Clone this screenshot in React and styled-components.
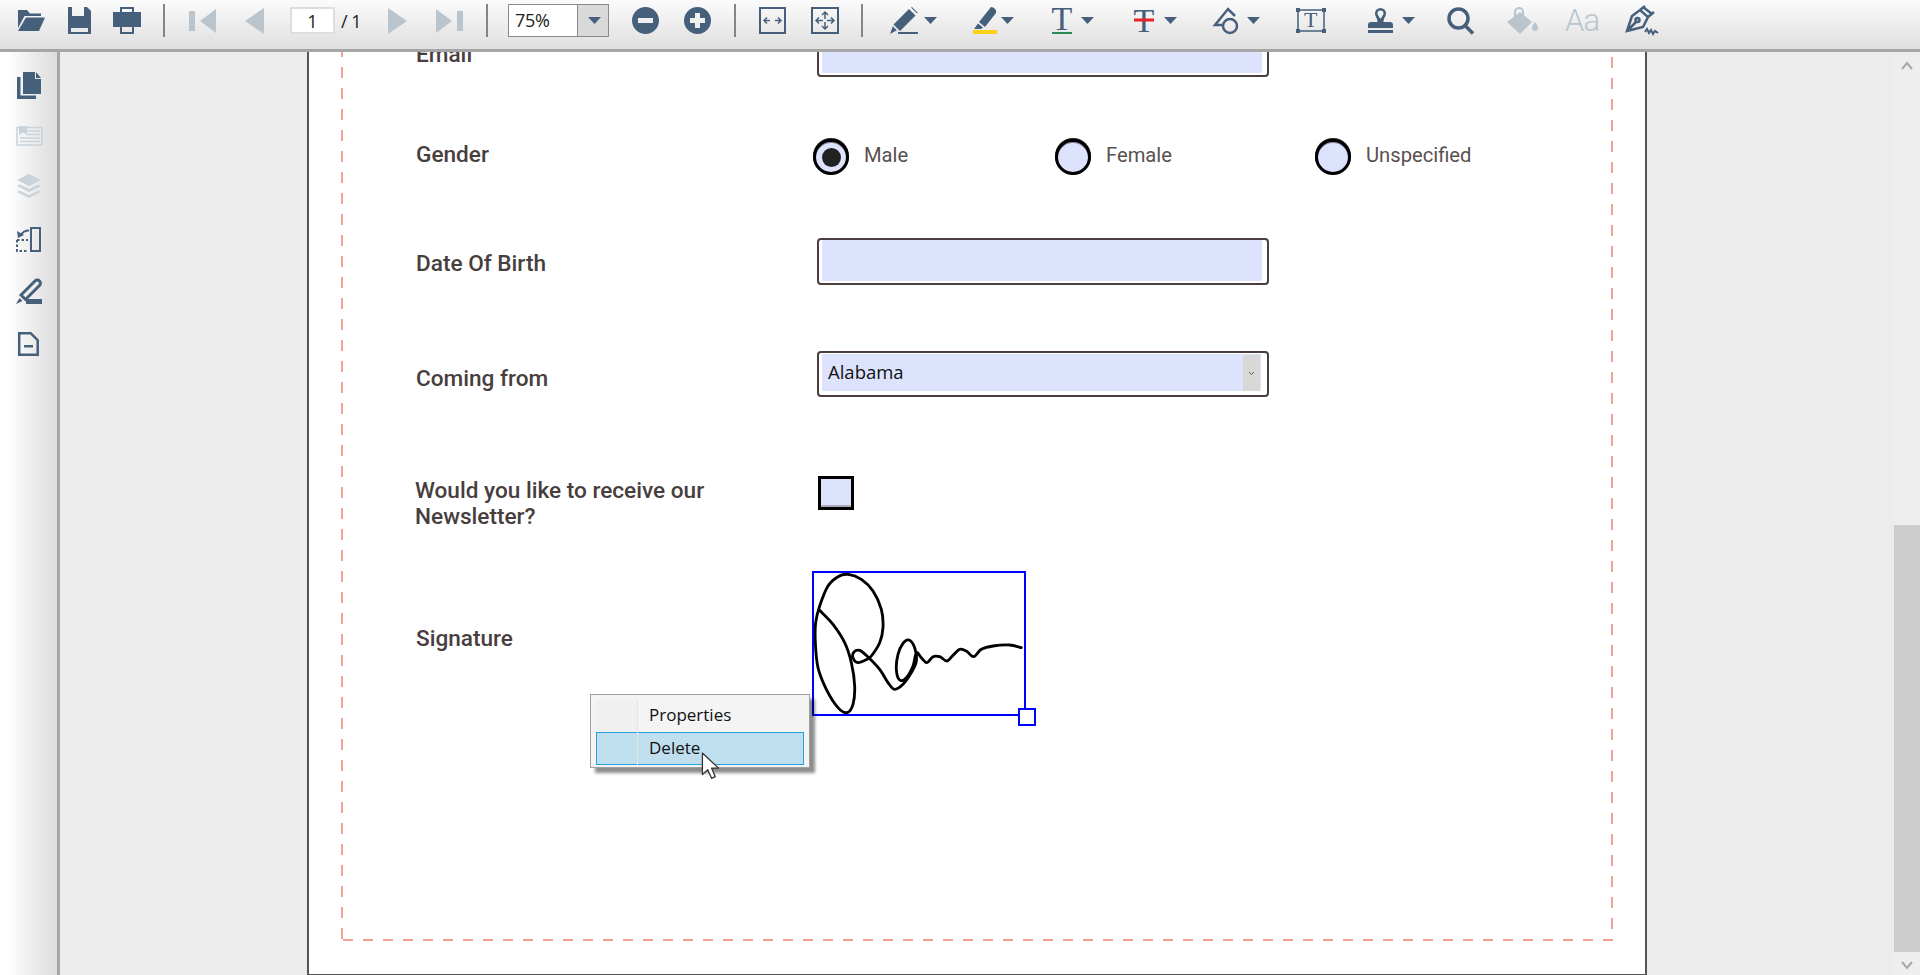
import React from 'react';
import styled, { createGlobalStyle } from 'styled-components';

const INK = '#46607c';
const OFF = '#b9c4cd';
const FAINT = '#c9d3db';
const FIELD = '#dde3fd';

const Global = createGlobalStyle`
  html, body { margin: 0; padding: 0; height: 975px; overflow: hidden; background: #ececec; }
  * { box-sizing: border-box; }
`;

const Shell = styled.div`
  width: 1920px; height: 975px; display: flex; flex-direction: column; overflow: hidden;
  font-family: Roboto, sans-serif;
`;
const Toolbar = styled.header`
  flex: none; height: 52px; display: flex; align-items: center; padding: 0 0 8px 18px;
  background: linear-gradient(#fbfbfb, #dfdfdf); border-bottom: 3px solid #a6a6a6;
`;
const Glyph = styled.svg`
  flex: none; display: block; overflow: visible; margin-left: ${p => p.$ml || 0}px; margin-top: ${p => p.$mt || 0}px;
  fill: ${p => p.$tone || INK};
`;
const Sep = styled.span`
  flex: none; width: 2px; height: 33px; background: #858585; margin-left: ${p => p.$ml}px;
`;
const PageBox = styled.span`
  flex: none; width: 45px; height: 27px; margin-left: 26px; background: #fff; border: 2px solid #dedede;
  font: 18px "Open Sans", sans-serif; color: #222; display: flex; align-items: center; justify-content: center;
`;
const PageTotal = styled.span`
  flex: none; width: 18px; margin-left: 6px; font: 18px "Open Sans", sans-serif; color: #222; white-space: nowrap; letter-spacing: -0.5px;
`;
const Zoom = styled.div`
  flex: none; width: 101px; height: 33px; margin-left: 20px; display: flex; border: 1px solid #8a8a8a; background: #fff;
`;
const ZoomValue = styled.span`
  flex: 1; padding-left: 6px; font: 18px/31px "Open Sans", sans-serif; color: #222; letter-spacing: -0.3px;
`;
const ZoomButton = styled.span`
  flex: none; width: 31px; padding-left: 2px; background: #d9d9d9; border-left: 1px solid #8a8a8a; display: flex; align-items: center; justify-content: center;
`;
const AaMark = styled.span`
  flex: none; margin-left: 27px; width: 34px; font: 300 31px/27px Roboto, sans-serif; color: ${OFF}; white-space: nowrap; letter-spacing: -1px;
`;

const Body = styled.div`flex: 1; min-height: 0; display: flex;`;
const Sidebar = styled.aside`
  flex: none; width: 60px; display: flex; flex-direction: column; align-items: flex-start; padding: 20px 0 0 16px;
  background: linear-gradient(90deg, #fff 12%, #dcdcdc 100%); border-right: 3px solid #a6a6a6;
`;
const Viewer = styled.main`flex: 1; min-width: 0; overflow: hidden; padding-left: 247px; background: #ececec;`;
const Paper = styled.section`
  width: 1340px; margin-top: -60px; padding: 32px 32px 33px; background: #fff;
  border: 2px solid #555;
`;
const Frame = styled.div`
  padding: 4px 0 225px 75px;
  background-repeat: no-repeat;
  background-image:
    repeating-linear-gradient(to top, transparent 0 2px, #f4a094 2px 13px, transparent 13px 21px),
    repeating-linear-gradient(to top, #f4a094 0 2px, transparent 2px 12px, #f4a094 12px 21px),
    repeating-linear-gradient(to left, #f4a094 0 10px, transparent 10px 20px);
  background-size: 2px 100%, 2px 100%, 100% 2px;
  background-position: left top, right top, left bottom;
`;
const Row = styled.div`
  display: grid; grid-template-columns: 401px 1fr; align-items: start; height: ${p => p.$h}px; margin-bottom: ${p => p.$after}px;
`;
const Label = styled.label`
  margin: ${p => p.$top}px 0 0 ${p => p.$left || 0}px; font: 500 22.6px/26px Roboto, sans-serif; color: #483e3e;
`;
const TextField = styled.div`
  width: 452px; height: 47px; border: 2px solid #4a3e3e; border-radius: 4px; background: ${FIELD};
  box-shadow: inset 3px 0 0 #fff, inset -5px -2px 0 #fff;
`;
const SelectField = styled.div`
  width: 452px; height: 46px; padding: 1px 6px 4px 3px; border: 2px solid #4a3e3e; border-radius: 4px; background: #fff;
`;
const SelectFill = styled.div`
  height: 100%; display: flex; align-items: stretch; justify-content: space-between; padding: 1px 1px 0 6px; background: ${FIELD};
  font: 18.5px/34px "Open Sans", sans-serif; color: #111;
`;
const SelectArrow = styled.span`
  flex: none; width: 17px; background: #d8d8d8; display: flex; align-items: center; justify-content: center;
`;
const RadioGroup = styled.div`display: flex; margin-left: -4px;`;
const RadioItem = styled.div`
  width: ${p => p.$w}px; display: flex; align-items: flex-start; gap: 15px;
  font: 20.2px/26px Roboto, sans-serif; color: #5a5050;
`;
const RadioText = styled.span`margin-top: 4px;`;
const RadioMark = styled.span`
  flex: none; width: 36px; height: 36px; margin-top: 1px; border-radius: 50%; border: 3px solid #000; background: ${FIELD};
  box-shadow: 0 -1px 0 #222, inset 0 1px 0 rgba(0,0,0,.4); display: flex; align-items: center; justify-content: center;
`;
const RadioDot = styled.span`width: 19px; height: 19px; border-radius: 50%; background: #222;`;
const CheckMark = styled.div`
  width: 36px; height: 34px; margin-left: 1px; border: 3px solid #000; background: ${FIELD}; box-shadow: inset 0 -2px 0 #aab;
`;
const SignatureBox = styled.div`
  position: relative; width: 214px; height: 145px; margin-left: -5px; border: 2px solid #00f; background: #fff;
`;
const Handle = styled.span`
  position: absolute; left: 204px; top: 135px; width: 18px; height: 18px; border: 2px solid #00f; background: #fff;
`;
const Menu = styled.div`
  position: absolute; left: -224px; top: 121px; width: 220px; height: 74px; padding: 4px 5px 0;
  background: #f4f4f4; border: 1px solid #a0a0a0; box-shadow: 5px 5px 3px rgba(0,0,0,.45);
`;
const MenuRow = styled.div`
  display: flex; height: 33px; align-items: stretch;
  font: 17px/31px "Open Sans", sans-serif; color: #111;
  background: ${p => (p.$active ? '#c0dfee' : 'transparent')};
  box-shadow: ${p => (p.$active ? 'inset 0 0 0 1px #26a0da' : 'none')};
`;
const MenuGutter = styled.span`
  flex: none; width: 42px; border-right: 1px solid #e4e4e4;
  background: ${p => (p.$active ? 'transparent' : '#f0f0f0')};
`;
const MenuText = styled.span`padding-left: 11px;`;
const Pointer = styled.svg`position: absolute; left: 110px; top: 57px; display: block;`;

const Scrollbar = styled.div`
  flex: none; width: 26px; display: flex; flex-direction: column; align-items: stretch; background: #eeeeee;
`;
const ScrollEnd = styled.span`
  flex: none; height: ${p => p.$h}px; padding-top: ${p => p.$pt || 0}px; display: flex; align-items: center; justify-content: center;
`;
const ScrollThumb = styled.span`flex: none; height: 427px; background: #cdcdcd;`;
const ScrollTrack = styled.span`flex: 1;`;

const Caret = ({ ml }) => (
  <Glyph $ml={ml} width="13" height="7" viewBox="0 0 13 7"><path d="M0 0h13L6.500 7z" /></Glyph>
);
const Chevron = ({ up }) => (
  <svg width="12" height="9" viewBox="0 0 12 9" fill="none" stroke="#a6a6a6" strokeWidth="2">
    <path d={up ? 'M1 8l5-6 5 6' : 'M1 1l5 6 5-6'} />
  </svg>
);
const Stroke = styled.g`fill: none; stroke: ${p => p.$tone || INK}; stroke-width: ${p => p.$w || 2}px;`;
const SerifT = styled.text`font: 34px "Liberation Serif", serif; fill: ${INK};`;

const sigPts = [[90,183],[130,225],[165,280],[185,340],[195,410],[190,465],[172,490],[145,475],[110,420],[85,355],[77,280],[78,220],[90,170],[115,110],[145,82],[175,75],[215,90],[250,125],[275,180],[280,235],[270,280],[245,320],[232,330],[205,340],[190,325],[193,308],[210,303],[232,320],[270,360],[295,400],[315,420],[340,405],[365,370],[380,335],[375,295],[358,272],[340,282],[325,315],[320,360],[330,392],[350,385],[370,350],[380,310],[395,325],[412,340],[430,322],[450,322],[472,335],[490,318],[510,300],[530,305],[552,322],[575,300],[610,290],[660,287],[695,295]];
const smooth = pts => pts.reduce((d, p, i) => {
  if (i === 0) return `M${p[0]} ${p[1]}`;
  const a = pts[Math.max(i - 2, 0)], b = pts[i - 1], c = pts[Math.min(i + 1, pts.length - 1)];
  return `${d}C${b[0] + (p[0] - a[0]) / 6} ${b[1] + (p[1] - a[1]) / 6} ${p[0] - (c[0] - b[0]) / 6} ${p[1] - (c[1] - b[1]) / 6} ${p[0]} ${p[1]}`;
}, '');

export default function App() {
  return (
    <Shell>
      <Global />
      <Toolbar>
        <Glyph width="27" height="27" viewBox="0 0 27 27"><path d="M0 3h9l3 3.500h11V9H6.500L0 21z" /><path d="M8 10.500h19L21 24H0z" /></Glyph>
        <Glyph $ml={23} width="23" height="27" viewBox="0 0 23 27"><path fillRule="evenodd" d="M0 0h19l4 4v23H0zM4 0v9h12V0zM3 21v4h17v-4z" /></Glyph>
        <Glyph $ml={22} width="28" height="27" viewBox="0 0 28 27"><path fillRule="evenodd" d="M0 5h7V0h14v5h7v15h-7v7H7v-7H0zM9 2v3h10V2zM9 20v5h10v-5z" /></Glyph>
        <Sep $ml={22} />
        <Glyph $ml={24} $tone={OFF} width="27" height="26" viewBox="0 0 27 26"><path d="M0 3h6v20H0zM11 13L27 1v24z" /></Glyph>
        <Glyph $ml={29} $tone={OFF} width="19" height="26" viewBox="0 0 19 26"><path d="M0 13L19 0v26z" /></Glyph>
        <PageBox>1</PageBox>
        <PageTotal>/ 1</PageTotal>
        <Glyph $ml={29} $tone={OFF} width="19" height="26" viewBox="0 0 19 26"><path d="M19 13L0 0v26z" /></Glyph>
        <Glyph $ml={29} $tone={OFF} width="27" height="26" viewBox="0 0 27 26"><path d="M27 3h-6v20h6zM16 13L0 1v24z" /></Glyph>
        <Sep $ml={23} />
        <Zoom>
          <ZoomValue>75%</ZoomValue>
          <ZoomButton><Glyph width="13" height="7" viewBox="0 0 13 7"><path d="M0 0h13L6.500 7z" /></Glyph></ZoomButton>
        </Zoom>
        <Glyph $ml={23} width="27" height="27" viewBox="0 0 27 27"><path fillRule="evenodd" d="M13.500 0a13.500 13.500 0 1 1 0 27a13.500 13.500 0 1 1 0-27zM6 11v5h15v-5z" /></Glyph>
        <Glyph $ml={25} width="27" height="27" viewBox="0 0 27 27"><path fillRule="evenodd" d="M13.500 0a13.500 13.500 0 1 1 0 27a13.500 13.500 0 1 1 0-27zM11 6v5H6v5h5v5h5v-5h5v-5h-5V6z" /></Glyph>
        <Sep $ml={23} />
        <Glyph $ml={23} width="27" height="27" viewBox="0 0 27 27">
          <Stroke><rect x="1" y="1" width="25" height="25" /></Stroke>
          <Stroke $w={1.500}><path d="M5 13.500h6M16 13.500h6M8 10.500l-3 3 3 3M19 10.500l3 3-3 3" /></Stroke>
        </Glyph>
        <Glyph $ml={25} width="28" height="27" viewBox="0 0 28 27">
          <Stroke><rect x="1" y="1" width="26" height="25" /></Stroke>
          <Stroke $w={1.500}><path d="M5 13.500h7M16 13.500h7M8 10.500l-3 3 3 3M20 10.500l3 3-3 3M14 5v7M14 15v7M11 8l3-3 3 3M11 19l3 3 3-3" /></Stroke>
        </Glyph>
        <Sep $ml={22} />
        <Glyph $ml={27} width="28" height="27" viewBox="0 0 28 27"><path d="M19 2l6.500 6.500L10 24l-6.500-6.500zM21 .5l1-.5 5.500 5.500-.5 1zM2.800 19.300l4 4L0 27zM8 25h20v2H8z" /></Glyph>
        <Caret ml={6} />
        <Glyph $ml={36} width="24" height="27" viewBox="0 0 24 27"><path d="M18 0c3 0 6 3 5 6L12 20l-6-5zM5 16.500l5 4-2 1.500H1z" /><path fill="#fcd116" d="M0 23h24v4H0z" /></Glyph>
        <Caret ml={4} />
        <Glyph $ml={38} width="20" height="27" viewBox="0 0 20 27"><SerifT x="-0.500" y="23">T</SerifT><path fill="#2e8b57" d="M0 25h20v2H0z" /></Glyph>
        <Caret ml={9} />
        <Glyph $ml={40} width="20" height="27" viewBox="0 0 20 27"><SerifT x="-0.500" y="25">T</SerifT><path fill="#e8202a" d="M0 11.500h20v3H0z" /></Glyph>
        <Caret ml={10} />
        <Glyph $ml={36} width="29" height="27" viewBox="0 0 29 27">
          <Stroke $w={2.500}><circle cx="17" cy="19" r="7" /><path d="M10 18H2L15 2l7 7" /></Stroke>
        </Glyph>
        <Caret ml={5} />
        <Glyph $ml={36} width="30" height="25" viewBox="0 0 30 25">
          <Stroke $w={1.500}><rect x="2" y="2" width="26" height="21" /></Stroke>
          <path d="M0 0h4v4H0zM26 0h4v4h-4zM0 21h4v4H0zM26 21h4v4h-4z" />
          <SerifT x="8" y="19" style={{ fontSize: 22 }}>T</SerifT>
        </Glyph>
        <Glyph $ml={42} width="25" height="27" viewBox="0 0 25 27">
          <path fillRule="evenodd" d="M12.500 1a5.500 5.500 0 0 1 5.500 5.500c0 3-2.500 4.500-2.500 8.500H22q3 0 3 3v3H0v-3q0-3 3-3h6.500c0-4-2.500-5.500-2.500-8.500A5.500 5.500 0 0 1 12.500 1zm0 2.500a3 3 0 0 0-3 3c0 2 2 3 2.500 5h1c.5-2 2.500-3 2.500-5a3 3 0 0 0-3-3z" />
          <path d="M0 23h25v3H0z" />
        </Glyph>
        <Caret ml={9} />
        <Glyph $ml={32} width="28" height="27" viewBox="0 0 28 27">
          <Stroke $w={3.500}><circle cx="11.500" cy="11.500" r="9.500" /><path d="M18 18.500l8 8" /></Stroke>
        </Glyph>
        <Glyph $ml={31} $tone={OFF} width="32" height="27" viewBox="0 0 32 27">
          <path d="M14 5l12 10-12 12L1 15z" />
          <Stroke $tone={OFF}><path d="M9 11V5a4 4 0 0 1 8 0v7" /></Stroke>
          <path d="M29 15c2 3 3 4 3 6a3 3 0 0 1-6 0c0-2 1-3 3-6z" />
        </Glyph>
        <AaMark>Aa</AaMark>
        <Glyph $ml={27} width="34" height="32" viewBox="0 0 34 32">
          <Stroke $w={2.500}><path d="M6 11L1 26l16-4 5-10-8-7zM14 5l5-4M22 12l6-5M17 2l9 7M1 26l9-9" /><circle cx="11.500" cy="15" r="2" /></Stroke>
          <Stroke $w={2}><path d="M19 27l2-3 2 4 2-3 2 4 2-3 3 2" /></Stroke>
        </Glyph>
      </Toolbar>
      <Body>
        <Sidebar>
          <Glyph $ml={1} width="24" height="27" viewBox="0 0 24 27"><path d="M6 0h12v7h6v15H6zM19 0l5 6h-5zM0 5h3.500v18.500H19V27H0z" /></Glyph>
          <Glyph $mt={27} $tone={FAINT} width="27" height="20" viewBox="0 0 27 20">
            <Stroke $tone={FAINT} $w={1.500}><path d="M1 1.500h25v17.500H1zM11 5h13M11 8.500h13M4 12h20M4 15.500h20" /></Stroke>
            <path d="M3 0h8v9L7 6.500 3 9z" />
          </Glyph>
          <Glyph $ml={1} $mt={28} $tone={FAINT} width="24" height="24" viewBox="0 0 24 24">
            <path d="M12 0l12 6-12 6L0 6z" />
            <path d="M2.500 10.500L12 15l9.500-4.500L24 12l-12 6L0 12zM2.500 16.500L12 21l9.500-4.500L24 18l-12 6L0 18z" />
          </Glyph>
          <Glyph $mt={29} width="25" height="25" viewBox="0 0 25 25">
            <Stroke $w={2}><rect x="15" y="1" width="9" height="23" /><path d="M1 13v11h11M1 13h11" strokeDasharray="2.500 2" /><path d="M13 3.500c-5 0-7 2-8 5" /></Stroke>
            <path d="M1 4l1 7 6-3z" />
          </Glyph>
          <Glyph $mt={26} width="26" height="26" viewBox="0 0 26 26">
            <Stroke $w={3}><path d="M5 17L19 3a3 3 0 0 1 4.500 4.500L9.500 21.500z" /></Stroke>
            <path d="M3.500 20l3 3L0 26zM10 21h16v5H10z" />
          </Glyph>
          <Glyph $ml={2} $mt={28} width="21" height="24" viewBox="0 0 21 24">
            <Stroke $w={2.500}><path d="M1.200 1.200h11.500l7 7v14.500H1.200z" /></Stroke>
            <path d="M6 13h9v2.500H6z" />
          </Glyph>
        </Sidebar>
        <Viewer>
          <Paper>
            <Frame>
              <Row $h={47} $after={61}>
                <Label $top={12}>Email</Label>
                <TextField />
              </Row>
              <Row $h={38} $after={62}>
                <Label $top={4}>Gender</Label>
                <RadioGroup>
                  <RadioItem $w={242}><RadioMark><RadioDot /></RadioMark><RadioText>Male</RadioText></RadioItem>
                  <RadioItem $w={260}><RadioMark /><RadioText>Female</RadioText></RadioItem>
                  <RadioItem $w={200}><RadioMark /><RadioText>Unspecified</RadioText></RadioItem>
                </RadioGroup>
              </Row>
              <Row $h={47} $after={66}>
                <Label $top={13}>Date Of Birth</Label>
                <TextField />
              </Row>
              <Row $h={46} $after={79}>
                <Label $top={15}>Coming from</Label>
                <SelectField>
                  <SelectFill>
                    Alabama
                    <SelectArrow>
                      <svg width="7" height="5" viewBox="0 0 7 5" fill="none" stroke="#555" strokeWidth="1"><path d="M1 1l2.500 2.500L6 1" /></svg>
                    </SelectArrow>
                  </SelectFill>
                </SelectField>
              </Row>
              <Row $h={53} $after={42}>
                <Label $top={2} $left={-1}>Would you like to receive our<br />Newsletter?</Label>
                <CheckMark />
              </Row>
              <Row $h={145} $after={0}>
                <Label $top={55}>Signature</Label>
                <SignatureBox>
                  <svg width="210" height="141" viewBox="73 71 630 423" fill="none" stroke="#000" strokeWidth="8.5" strokeLinecap="round" strokeLinejoin="round">
                    <path d={smooth(sigPts)} />
                  </svg>
                  <Handle />
                  <Menu>
                    <MenuRow><MenuGutter /><MenuText>Properties</MenuText></MenuRow>
                    <MenuRow $active><MenuGutter $active /><MenuText>Delete</MenuText></MenuRow>
                    <Pointer width="20" height="29" viewBox="0 0 18 27">
                      <path d="M1 1v20l5-4.500 3.500 8 3.500-1.500-3.500-8H16z" fill="#fff" stroke="#333" strokeWidth="1.200" strokeLinejoin="round" />
                    </Pointer>
                  </Menu>
                </SignatureBox>
              </Row>
            </Frame>
          </Paper>
        </Viewer>
        <Scrollbar>
          <ScrollEnd $h={26}><Chevron up /></ScrollEnd>
          <ScrollTrack />
          <ScrollThumb />
          <ScrollEnd $h={23} $pt={3}><Chevron /></ScrollEnd>
        </Scrollbar>
      </Body>
    </Shell>
  );
}
